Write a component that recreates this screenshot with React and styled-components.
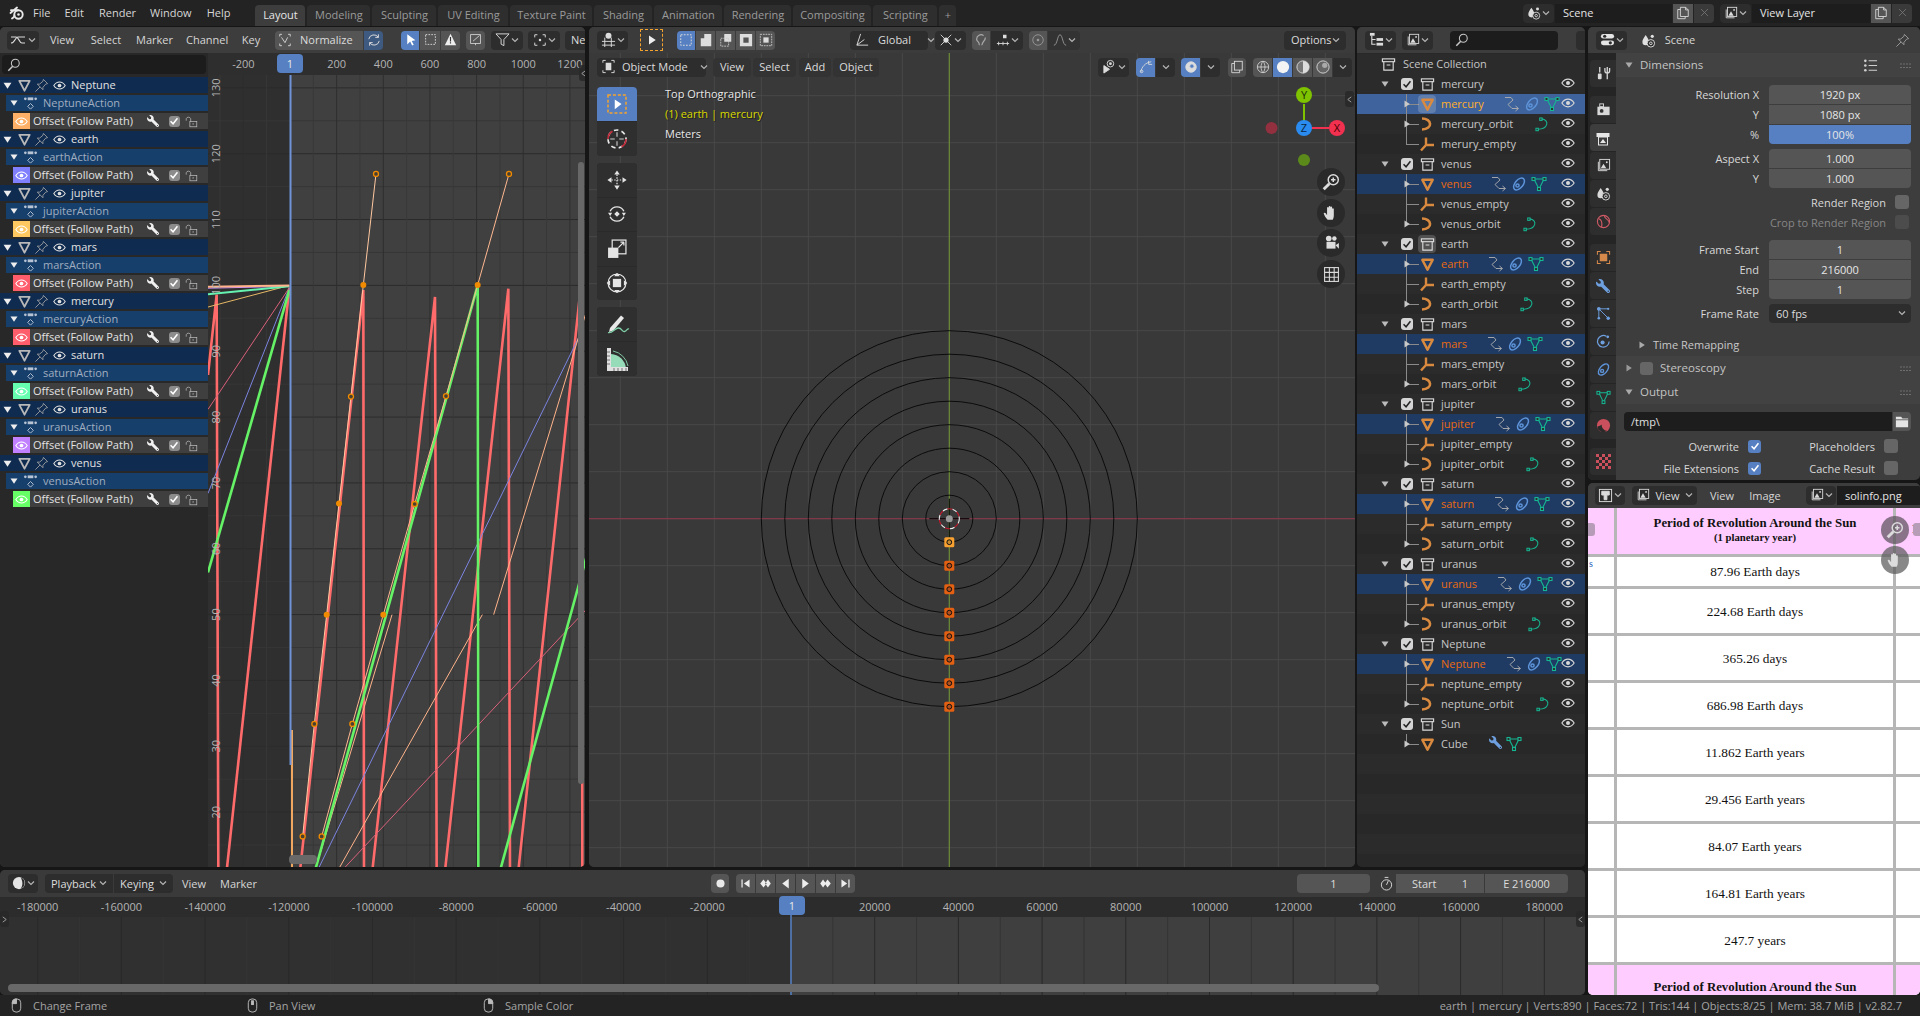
import React from "react";
import styled, { createGlobalStyle } from "styled-components";
import { FaWrench } from "react-icons/fa";

const GlobalStyle = createGlobalStyle`
	html, body { margin: 0; padding: 0; background: #161616; }
	body { font-family: "Open Sans", "DejaVu Sans", sans-serif; font-size: 11px; color: #d6d6d6; white-space: nowrap; }
	svg text { font-family: "Open Sans", "DejaVu Sans", sans-serif; }
`;

const BLUE = "#5680c2";

// layout
const Shell = styled.div`
	width: 1920px;
	height: 1016px;
	overflow: hidden;
	display: grid;
	grid-template-rows: 26px 969px 21px;
	background: #161616;
`;
const TopBar = styled.div`
	display: flex;
	align-items: center;
	background: #232323;
`;
const Workspace = styled.div`
	display: flex;
	gap: 3px;
	padding-top: 1px;
`;
const LeftCol = styled.div`
	width: 1585px;
	display: flex;
	flex-direction: column;
	gap: 3px;
`;
const RightCol = styled.div`
	width: 332px;
	display: flex;
	flex-direction: column;
	gap: 3px;
`;
const UpperRow = styled.div`
	height: 840px;
	display: flex;
`;
const Area = styled.div`
	position: relative;
	flex: none;
	width: ${(p) => p.$w}px;
	height: ${(p) => (p.$h ? p.$h + "px" : "100%")};
	margin-left: ${(p) => p.$ml || 0}px;
	background: ${(p) => p.$bg || "#3d3d3d"};
	border-radius: 5px;
	overflow: hidden;
	display: flex;
	flex-direction: column;
`;
const Header = styled.div`
	flex: none;
	height: ${(p) => p.$h || 26}px;
	display: flex;
	align-items: center;
	background: ${(p) => p.$bg || "#3d3d3d"};
`;
const Sp = styled.div`
	flex: none;
	width: ${(p) => p.$w}px;
`;
const Fill = styled.div`
	flex: 1;
`;

// top bar
const MenuItem = styled.span`
	flex: none;
	margin-right: ${(p) => p.$mr || 0}px;
	padding-bottom: 2px;
	color: ${(p) => p.$c || "#d6d6d6"};
`;
const Tab = styled.div`
	flex: none;
	width: ${(p) => p.$w}px;
	height: 21px;
	margin: 5px 2px 0 0;
	padding-bottom: 2px;
	box-sizing: border-box;
	display: flex;
	align-items: center;
	justify-content: center;
	border-radius: 4px 4px 0 0;
	background: ${(p) => (p.$on ? "#3d3d3d" : "#2e2e2e")};
	color: ${(p) => (p.$on ? "#e6e6e6" : "#9a9a9a")};
`;
const FieldDark = styled.div`
	flex: none;
	width: ${(p) => p.$w}px;
	height: 19px;
	padding: 0 0 1px 8px;
	box-sizing: border-box;
	display: flex;
	align-items: center;
	background: #1d1d1d;
	color: #e4e4e4;
`;

// header buttons
const Btn = styled.div`
	flex: none;
	width: ${(p) => p.$w}px;
	height: ${(p) => p.$h || 19}px;
	margin-left: ${(p) => p.$ml || 0}px;
	display: flex;
	align-items: center;
	justify-content: ${(p) => p.$j || "center"};
	gap: ${(p) => p.$gap || 0}px;
	box-sizing: border-box;
	padding: 0 ${(p) => p.$pad || 0}px 1px;
	border-radius: ${(p) => (p.$r !== undefined ? p.$r : "4px")};
	background: ${(p) => (p.$on ? BLUE : p.$bg || "#2d2d2d")};
	color: ${(p) => p.$c || "#dcdcdc"};
`;
const DashedBtn = styled(Btn)`
	border: 1px dashed #f3a32e;
`;
const BtnGroup = styled.div`
	flex: none;
	display: flex;
	margin-left: ${(p) => p.$ml || 0}px;
	gap: 1px;
	border-radius: 4px;
	overflow: hidden;
`;
const Word = styled.span`
	flex: none;
	width: ${(p) => p.$w}px;
	text-align: center;
	margin-left: ${(p) => p.$ml || 0}px;
	padding-bottom: 1px;
	color: #d6d6d6;
`;

// graph editor
const GraphBody = styled.div`
	flex: 1;
	display: flex;
	min-height: 0;
`;
const ChannelList = styled.div`
	flex: none;
	width: 208px;
	background: #282828;
`;
const Search = styled.div`
	width: ${(p) => p.$w}px;
	height: 19px;
	margin: ${(p) => p.$m || "2px 0 0 2px"};
	padding-left: 5px;
	box-sizing: border-box;
	display: flex;
	align-items: center;
	background: #1c1c1c;
	border-radius: 4px;
	color: #c8c8c8;
`;
const Channels = styled.div`
	margin-top: 3px;
	display: flex;
	flex-direction: column;
	gap: 2px;
`;
const Channel = styled.div`
	height: 16px;
	margin-left: ${(p) => p.$ml || 0}px;
	display: flex;
	align-items: center;
	gap: ${(p) => p.$gap || 0}px;
	background: ${(p) => p.$bg};
	color: ${(p) => p.$c || "#e2e2e2"};

	& > span {
		position: relative;
		top: -1px;
	}
`;
const Swatch = styled.div`
	flex: none;
	width: 17px;
	height: 16px;
	margin-right: 3px;
	display: flex;
	align-items: center;
	justify-content: center;
	background: ${(p) => p.$c};
	color: #fff;
`;
const Tick = styled.div`
	flex: none;
	width: ${(p) => p.$s || 12}px;
	height: ${(p) => p.$s || 12}px;
	margin-left: ${(p) => p.$ml || 0}px;
	border-radius: 3px;
	display: flex;
	align-items: center;
	justify-content: center;
	background: ${(p) => p.$bg};
	color: ${(p) => p.$c || "#fff"};
`;
const Plot = styled.div`
	position: relative;
	flex: 1;
	min-width: 0;
`;
const PlotSvg = styled.svg`
	display: block;
`;
const Thumb = styled.div`
	position: absolute;
	left: ${(p) => p.$x}px;
	top: ${(p) => p.$y}px;
	width: ${(p) => p.$w}px;
	height: ${(p) => p.$h}px;
	background: #686868;
	border-radius: 4px;
`;
const Badge = styled.div`
	position: absolute;
	left: ${(p) => p.$x}px;
	top: ${(p) => p.$y}px;
	width: ${(p) => p.$w}px;
	height: 19px;
	display: flex;
	align-items: center;
	justify-content: center;
	background: ${BLUE};
	border-radius: 4px;
	color: #e8e8e8;
`;
const SideArrow = styled.div`
	position: absolute;
	left: ${(p) => p.$x}px;
	top: ${(p) => p.$y}px;
	width: 9px;
	height: 16px;
	display: flex;
	align-items: center;
	justify-content: center;
	background: rgba(40, 40, 40, 0.85);
	border-radius: 3px;
	color: #a8a8a8;
`;

// viewport
const Canvas = styled.div`
	position: relative;
	flex: 1;
	min-height: 0;
`;
const CanvasSvg = styled.svg`
	position: absolute;
	left: 0;
	top: 0;
`;
const CanvasLayer = styled.div`
	position: relative;
`;
const OverlayRow = styled.div`
	height: 24px;
	display: flex;
	align-items: center;
	padding-top: 2px;
`;
const ToolRow = styled.div`
	display: flex;
	margin-top: 8px;
	padding-left: 8px;
	gap: 28px;
`;
const Tools = styled.div`
	flex: none;
	width: 40px;
	display: flex;
	flex-direction: column;
`;
const ToolGroup = styled.div`
	margin-bottom: 7px;
	border-radius: 4px;
	overflow: hidden;
	display: flex;
	flex-direction: column;
	gap: 1px;
	background: #2a2a2a;
`;
const Tool = styled.div`
	height: ${(p) => p.$h || 34}px;
	display: flex;
	align-items: center;
	justify-content: center;
	background: ${(p) => (p.$on ? BLUE : "#2f2f2f")};
	color: #e4e4e4;
`;
const InfoBlock = styled.div`
	margin-top: -3px;
`;
const Info = styled.div`
	line-height: 20px;
	color: ${(p) => p.$c || "#e8e8e8"};
	text-shadow: 1px 1px 0 #222;
`;
const Gizmo = styled.svg`
	position: absolute;
	left: 674px;
	top: 29px;
`;
const NavBtn = styled.div`
	position: absolute;
	left: ${(p) => p.$x}px;
	top: ${(p) => p.$y}px;
	width: 28px;
	height: 28px;
	border-radius: 50%;
	display: flex;
	align-items: center;
	justify-content: center;
	background: ${(p) => p.$bg || "#2a2a2a"};
	color: #dcdcdc;
`;

// outliner
const OutRows = styled.div`
	margin-top: 1px;
	display: flex;
	flex-direction: column;
`;
const OutRow = styled.div`
	position: relative;
	flex: none;
	height: 20px;
	display: flex;
	align-items: center;
	padding-left: ${(p) => p.$pl || 0}px;
	background: ${(p) => (p.$sel === 2 ? "#3f639c" : p.$sel === 1 ? "#1f3a63" : p.$odd ? "#2b2b2b" : "#282828")};
	color: ${(p) => p.$c || "#c6c6c6"};

	& > span {
		position: relative;
		top: -1px;
	}

	${(p) =>
		p.$tree &&
		`&::before {
			content: "";
			position: absolute;
			left: 49px;
			top: 0;
			width: 1px;
			height: ${p.$last ? "50%" : "100%"};
			background: #8a8a8a;
		}
		&::after {
			content: "";
			position: absolute;
			left: 49px;
			top: 50%;
			width: 13px;
			height: 1px;
			background: #8a8a8a;
		}`}
`;
const OutIcon = styled.div`
	position: relative;
	z-index: 1;
	flex: none;
	width: 18px;
	height: 18px;
	margin-left: ${(p) => p.$ml || 0}px;
	margin-right: ${(p) => p.$mr || 6}px;
	display: flex;
	align-items: center;
	justify-content: center;
	border-radius: 4px;
	background: ${(p) => (p.$hi ? "rgba(255,255,255,0.18)" : "transparent")};
	color: ${(p) => p.$c || "#d0d0d0"};
`;
const RowEye = styled.div`
	position: absolute;
	right: 10px;
	top: 2px;
	color: #d8d8d8;
`;
const Mark = styled.div`
	position: absolute;
	z-index: 1;
	left: ${(p) => p.$x}px;
	top: ${(p) => p.$y || 6}px;
	color: #d0d0d0;
`;
const Extras = styled.div`
	flex: none;
	display: flex;
	gap: 4px;
	margin-left: ${(p) => p.$ml}px;
`;

// properties
const PropsBody = styled.div`
	flex: 1;
	display: flex;
	min-height: 0;
`;
const TabCol = styled.div`
	flex: none;
	width: 28px;
	padding-top: 7px;
	background: #252525;
	display: flex;
	flex-direction: column;
	align-items: flex-end;
`;
const TabGroup = styled.div`
	margin-bottom: 9px;
	display: flex;
	flex-direction: column;
	gap: 1px;
`;
const PropTab = styled.div`
	width: 26px;
	height: 27px;
	display: flex;
	align-items: center;
	justify-content: center;
	border-radius: 4px 0 0 4px;
	background: ${(p) => (p.$on ? "#3d3d3d" : "#2e2e2e")};
`;
const Panel = styled.div`
	flex: 1;
	min-width: 0;
`;
const PanelHead = styled.div`
	height: 24px;
	display: flex;
	align-items: center;
	padding: 0 9px 0 9px;
	gap: 7px;
	background: ${(p) => p.$bg || "#424242"};
	color: #c4c4c4;
	font-size: 11.5px;

	& > span {
		position: relative;
		top: -1px;
	}
`;
const Fields = styled.div`
	margin-top: ${(p) => p.$mt}px;
	display: flex;
	flex-direction: column;
	gap: 1px;
`;
const PropRow = styled.div`
	height: 19px;
	display: grid;
	grid-template-columns: 143px 142px;
	column-gap: 10px;
	align-items: center;
`;
const PropLabel = styled.div`
	padding-bottom: 1px;
	text-align: right;
	color: #d8d8d8;
`;
const NumField = styled.div`
	height: 19px;
	padding-bottom: 1px;
	box-sizing: border-box;
	display: flex;
	align-items: center;
	justify-content: center;
	background: ${(p) => (p.$on ? BLUE : p.$bg || "#555")};
	border-radius: ${(p) => p.$r || 0};
	color: #e6e6e6;
`;
const DropField = styled.div`
	height: 19px;
	padding: 0 5px 1px 7px;
	box-sizing: border-box;
	display: flex;
	align-items: center;
	justify-content: space-between;
	background: #2d2d2d;
	border-radius: 4px;
	color: #dcdcdc;
`;
const CheckRow = styled.div`
	height: 20px;
	margin-top: ${(p) => p.$mt || 0}px;
	display: flex;
	align-items: center;
	justify-content: flex-end;
	gap: 9px;
	padding-right: ${(p) => p.$pr ?? 11}px;
	color: ${(p) => p.$c || "#d8d8d8"};
`;
const TwoCols = styled.div`
	display: grid;
	grid-template-columns: 145px 148px;
	margin-top: ${(p) => p.$mt || 0}px;
`;
const SubHead = styled.div`
	height: 23px;
	margin-top: 10px;
	padding-left: 22px;
	display: flex;
	align-items: center;
	gap: 7px;
	color: #c8c8c8;
	font-size: 11px;
`;
const PathField = styled.div`
	margin: 8px 9px 0 8px;
	height: 19px;
	display: flex;
	gap: 1px;
	border-radius: 4px;
	overflow: hidden;
`;
const PathText = styled.div`
	flex: 1;
	padding-left: 7px;
	display: flex;
	align-items: center;
	background: #1d1d1d;
	color: #e0e0e0;
`;
const PathBtn = styled.div`
	flex: none;
	width: 18px;
	display: flex;
	align-items: center;
	justify-content: center;
	background: #555;
	color: #e4e4e4;
`;

// image editor
const ImageView = styled.div`
	position: relative;
	flex: 1;
	min-height: 0;
	overflow: hidden;
	display: grid;
	grid-template-columns: 29px 279px 24px;
	grid-template-rows: 49px 32px repeat(8, 47px) 60px;
	font-family: "Liberation Serif", serif;
	color: #111;
	background: #fff;
`;
const Cell = styled.div`
	box-sizing: border-box;
	padding-top: ${(p) => (p.$pink ? 0 : 1)}px;
	padding-bottom: ${(p) => (p.$pink ? 3 : 0)}px;
	display: flex;
	flex-direction: column;
	align-items: ${(p) => p.$a || "center"};
	justify-content: ${(p) => p.$j || "center"};
	text-align: center;
	overflow: hidden;
	border-bottom: 3px solid #b6b6b6;
	border-right: ${(p) => (p.$end ? "0" : "3px solid #b6b6b6")};
	background: ${(p) => (p.$pink ? "#ffccff" : "#fff")};
	font-size: ${(p) => (p.$pink ? 12.8 : 13.3)}px;
	font-weight: ${(p) => (p.$pink ? 700 : 400)};
`;
const CellSub = styled.div`
	font-size: 10.7px;
	line-height: 13px;
`;
const TitleLine = styled.div`
	line-height: 15px;
	margin-top: ${(p) => p.$mt || 0}px;
`;
const Stray = styled.span`
	font-size: 10px;
	padding-left: 1px;
	color: ${(p) => p.$c};
`;
const Pill = styled.div`
	position: absolute;
	left: ${(p) => p.$x}px;
	top: 15px;
	width: 7px;
	height: 13px;
	background: #b79cb7;
	border-radius: ${(p) => p.$r};
`;

// timeline
const TimeCanvas = styled.div`
	position: relative;
	flex: 1;
	min-height: 0;
`;

// status bar
const StatusBar = styled.div`
	display: flex;
	align-items: center;
	background: #232323;
	color: #a4a4a4;
	padding-bottom: 1px;
`;
const Hint = styled.span`
	width: ${(p) => p.$w}px;
`;

// icons
const SvgBox = styled.svg`
	flex: none;
	display: block;
	width: ${(p) => p.$s}px;
	height: ${(p) => p.$s}px;
`;
const Ico = ({ s = 16, w = 1.2, children, ...rest }) => (
	<SvgBox $s={s} viewBox="0 0 16 16" fill="none" stroke="currentColor" strokeWidth={w} {...rest}>
		{children}
	</SvgBox>
);
const Chevron = ({ s = 8 }) => (
	<SvgBox $s={s} viewBox="0 0 8 8" fill="none" stroke="#b4b4b4" strokeWidth="1.2">
		<path d="M1 2.5 4 5.5 7 2.5" />
	</SvgBox>
);
const Eye = ({ s = 14 }) => (
	<Ico s={s} w={1.3}>
		<path d="M1 8C3 4.8 5.4 3.6 8 3.6S13 4.8 15 8C13 11.2 10.6 12.4 8 12.4S3 11.2 1 8Z" />
		<circle cx="8" cy="8" r="2.3" fill="currentColor" stroke="none" />
	</Ico>
);
const Tri = ({ s = 16, w = 2.4, c }) => (
	<Ico s={s} w={w} style={c ? { color: c } : undefined}>
		<path d="M2.5 3H13.5L8 13.5Z" strokeLinejoin="round" />
	</Ico>
);
const Pin = () => (
	<Ico s={15} w={0.9} style={{ color: "#a6a6a6" }}>
		<path d="M10 1.5 14.5 6 12.5 6.5 9.5 10 9.5 12.5 3.5 6.5 6 6.5 9.5 3.5Z M6.5 9.5 1.5 14.5" />
	</Ico>
);
const ActionIcon = () => (
	<Ico s={15} w={1} style={{ color: "#b8c4d4" }}>
		<rect x="5" y="1.5" width="6" height="3" fill="currentColor" stroke="none" />
		<circle cx="2.5" cy="3" r="1.4" fill="currentColor" stroke="none" />
		<circle cx="13.5" cy="3" r="1.4" fill="currentColor" stroke="none" />
		<path d="M8 8 11 11 8 14 5 11Z" />
	</Ico>
);
const Unlock = () => (
	<Ico s={13} w={0.9} style={{ color: "#bdbdbd" }}>
		<rect x="6" y="8" width="8.5" height="6.5" />
		<path d="M7 8V4.5A3 3 0 0 0 1.5 4.5V7" />
		<circle cx="10" cy="11" r="0.8" fill="currentColor" stroke="none" />
	</Ico>
);
const Lens = () => (
	<Ico s={14} w={1.2}>
		<circle cx="9.5" cy="6" r="4.5" />
		<path d="M6.5 9.5 1.5 14.5" strokeWidth="1.8" />
	</Ico>
);
const Check = ({ s = 10 }) => (
	<Ico s={s} w={2.4}>
		<path d="M2.5 8.5 6.5 12.5 13.5 3.5" />
	</Ico>
);
const Collection = () => (
	<Ico s={15} w={1.2}>
		<rect x="1.5" y="2" width="13" height="3" />
		<path d="M3 5V14H13V5M6 8.5H10" />
	</Ico>
);
const CurveObj = () => (
	<Ico s={16} w={2.6}>
		<path d="M3 2.5C13 2.5 14.5 13 3 13.5" />
	</Ico>
);
const EmptyObj = () => (
	<Ico s={16} w={2.4}>
		<path d="M7 1.5V9M7 9H15M7 9 2 14.5" />
	</Ico>
);
const AnimData = () => (
	<Ico s={16} w={0.9} style={{ color: "#b0b0b0" }}>
		<path d="M1 1.5H7L9 4 4 8.5 8 12.5H14M11.5 10 14.5 12.5 11.5 15" />
	</Ico>
);
const LinkData = ({ c = "#5d93d8", s = 16 }) => (
	<Ico s={s} w={1.5} style={{ color: c }}>
		<ellipse cx="8" cy="8" rx="4" ry="7" transform="rotate(40 8 8)" />
		<circle cx="6.5" cy="9.5" r="1.6" />
	</Ico>
);
const MeshData = ({ c = "#16b592", s = 16 }) => (
	<Ico s={s} w={1.1} style={{ color: c }}>
		<path d="M3 3H13L8 13Z" />
		<rect x="1" y="1.5" width="3" height="3" fill="#2a2a2a" />
		<rect x="12" y="1.5" width="3" height="3" fill="#2a2a2a" />
		<rect x="6.5" y="11.5" width="3" height="3" fill="#2a2a2a" />
	</Ico>
);
const CurveData = () => (
	<Ico s={15} w={1.1} style={{ color: "#16b592" }}>
		<path d="M7 2C16 3 14 13 3 13" />
		<rect x="5" y="1" width="2.6" height="2.6" />
		<rect x="1" y="12" width="2.6" height="2.6" />
	</Ico>
);
const PictureIcon = ({ s = 15, c = "#dcdcdc" }) => (
	<Ico s={s} w={1} style={{ color: c }}>
		<rect x="4" y="1.5" width="10.5" height="10.5" />
		<path d="M2.5 4V13.5H12" />
		<path d="M5 11 8 6 11 11Z" fill="currentColor" stroke="none" />
		<circle cx="11.5" cy="4.5" r="1" fill="currentColor" stroke="none" />
	</Ico>
);
const SceneIcon = ({ s = 15, c = "#dcdcdc" }) => (
	<Ico s={s} w={1} style={{ color: c }}>
		<path d="M5 2C7 5 8.5 7 8.5 9.5A3.5 3.5 0 0 1 1.5 9.5C1.5 7 3 5 5 2Z" fill="currentColor" stroke="none" />
		<circle cx="12" cy="3.5" r="1.7" fill="currentColor" stroke="none" />
		<circle cx="10.5" cy="11" r="4" fill="#2d2d2d" />
		<circle cx="10.5" cy="11" r="1.4" />
	</Ico>
);
const CopyIcon = () => (
	<Ico s={14} w={1}>
		<path d="M5 1.5H11L14 4.5V12H5ZM5 4H2V14.5H10.5V12M11 1.5V4.5H14" />
	</Ico>
);
const CrossIcon = () => (
	<Ico s={11} w={1.2}>
		<path d="M3 3 13 13M13 3 3 13" />
	</Ico>
);
const Arrow = ({ s = 14, c = "#fff" }) => (
	<SvgBox $s={s} viewBox="0 0 16 16" fill={c}>
		<path d="M4 1.5 14 9 9.5 9.8 12 14.5 10 15.5 7.6 10.6 4 14Z" />
	</SvgBox>
);
const DashBox = ({ s = 14, c = "currentColor" }) => (
	<Ico s={s} w={1.1} style={{ color: c }}>
		<rect x="2" y="2" width="12" height="12" strokeDasharray="2 1.5" />
	</Ico>
);
const Caret = ({ open, c = "#e6e6e6", s = 9 }) => (
	<SvgBox $s={s} viewBox="0 0 8 8" fill={c}>
		<path d={open ? "M0.5 1.5H7.5L4 6.8Z" : "M1.5 0.5 6.8 4 1.5 7.5Z"} />
	</SvgBox>
);
const Grip = () => (
	<SvgBox $s={11} viewBox="0 0 11 11" fill="#9a9a9a">
		{[1, 4, 7, 10].map((x) => [3.5, 7].map((y) => <rect key={x + "-" + y} x={x - 0.5} y={y} width="1" height="1" />))}
	</SvgBox>
);
const PresetList = () => (
	<Ico s={15} w={1.1} style={{ color: "#cfcfcf" }}>
		<path d="M6 3H15M6 8H15M6 13H15" />
		<circle cx="2.5" cy="3" r="1.4" fill="currentColor" stroke="none" />
		<circle cx="2.5" cy="8" r="1.4" fill="currentColor" stroke="none" />
		<circle cx="2.5" cy="13" r="1.4" fill="currentColor" stroke="none" />
	</Ico>
);
const Mouse = ({ fill }) => (
	<Ico s={15} w={1} style={{ color: "#bcbcbc" }}>
		<rect x="3.5" y="1" width="9" height="14" rx="4" />
		{fill === "l" && <path d="M3.5 6V5A4 4 0 0 1 8 1V6Z" fill="currentColor" />}
		{fill === "m" && <rect x="7" y="3" width="2" height="4" fill="currentColor" />}
		{fill === "r" && <path d="M8 1A4 4 0 0 1 12.5 5V6H8Z" fill="currentColor" />}
	</Ico>
);
const Logo = () => (
	<SvgBox $s={16} viewBox="0 0 16 16" fill="none" stroke="#e8e8e8" strokeWidth="1.9">
		<circle cx="9.5" cy="9.5" r="4.2" />
		<path d="M9 5.2H2M8 2.5 1.5 8M5.3 10.5C5.5 11 4.5 12.5 3 13.5" strokeLinecap="round" />
		<circle cx="9.5" cy="9.5" r="1.3" fill="#e8e8e8" stroke="none" />
	</SvgBox>
);

// small drawings for the toolbar and property tabs
const MoveIcon = () => (
	<Ico s={22} w={0.9}>
		<path d="M8 4V12M4 8H12" strokeDasharray="1 1" />
		<path d="M8 1 10 4H6ZM8 15 6 12H10ZM1 8 4 6V10ZM15 8 12 10V6Z" fill="currentColor" stroke="none" />
	</Ico>
);
const RotateIcon = () => (
	<Ico s={22} w={1}>
		<path d="M3 6A5.5 5.5 0 0 1 13 6M3 10A5.5 5.5 0 0 0 13 10" />
		<path d="M8 6 10 8 8 10 6 8ZM1.5 7H4.5L3 9.5ZM11.5 7H14.5L13 9.5Z" fill="currentColor" stroke="none" />
	</Ico>
);
const ScaleIcon = () => (
	<Ico s={22} w={0.9}>
		<rect x="4.5" y="1.5" width="10" height="10" />
		<rect x="1.5" y="7" width="7.5" height="7.5" fill="currentColor" stroke="none" />
		<path d="M9 7 13 3M13 3H10.5M13 3V5.5" />
	</Ico>
);
const TransformIcon = () => (
	<Ico s={22} w={0.9}>
		<circle cx="8" cy="8" r="6.5" />
		<rect x="5" y="5" width="6" height="6" fill="currentColor" stroke="none" />
		<path d="M8 .5 10 3H6ZM8 15.5 6 13H10ZM.5 8 3 6V10ZM15.5 8 13 10V6Z" fill="currentColor" stroke="none" />
	</Ico>
);
const AnnotateIcon = () => (
	<SvgBox $s={26} viewBox="0 0 26 26" fill="none">
		<path d="M6 17 17 4.5 20 7 9.5 19.5 5 21Z" fill="#e8e8e8" />
		<path d="M4 21.5C8 23 11 17 14.5 17S18 21 20.5 20.5 23 17 25 18" stroke="#7fd0a8" strokeWidth="1.3" />
	</SvgBox>
);
const MeasureIcon = () => (
	<SvgBox $s={26} viewBox="0 0 26 26" fill="none">
		<path d="M7 8A16 16 0 0 1 22 22H7Z" fill="#97dcb8" />
		<path d="M9 5A19 19 0 0 1 24 20" stroke="#7fc4a0" strokeWidth="1" />
		<path d="M3 2H7V21H24V25H3Z" fill="#e0e0e0" />
		<path d="M3 6H6M3 10H6M3 14H6M3 18H6M10 22V25M14 22V25M18 22V25M22 22V25" stroke="#555" strokeWidth="0.8" />
	</SvgBox>
);
const CursorIcon = () => (
	<Ico s={24} w={1.1}>
		<circle cx="8" cy="8" r="6" stroke="#e8e8e8" strokeDasharray="3 2.2" />
		<path d="M2 8A6 6 0 0 1 5 2.8M14 8A6 6 0 0 1 11 13.2" stroke="#c22b3a" />
		<path d="M8 3.5V6.5M8 9.5V12.5M3.5 8H6.5M9.5 8H12.5" stroke="#999" />
	</Ico>
);
const SelectTool = () => (
	<Ico s={24} w={1} style={{ color: "#f3a32e" }}>
		<rect x="2" y="2" width="12" height="12" strokeDasharray="2 1.3" />
		<path d="M6.5 5V11.5L11 8Z" fill="#fff" stroke="none" />
	</Ico>
);
const ToolsTab = () => (
	<Ico s={15} w={1.4} style={{ color: "#d8d8d8" }}>
		<path d="M4 1V7M12 1V14M9.5 2V5A2.5 2.5 0 0 0 14.5 5V2" />
		<rect x="2" y="8" width="4" height="6" rx="1" fill="currentColor" stroke="none" />
	</Ico>
);
const RenderTab = () => (
	<Ico s={15} w={1} style={{ color: "#d8d8d8" }}>
		<rect x="1.5" y="5" width="13" height="9" fill="currentColor" stroke="none" />
		<rect x="4" y="2" width="4" height="3" />
		<circle cx="6" cy="9.5" r="2" fill="#333" stroke="none" />
	</Ico>
);
const OutputTab = () => (
	<Ico s={16} w={1} style={{ color: "#e6e6e6" }}>
		<rect x="1.5" y="3" width="13" height="4" fill="currentColor" stroke="none" />
		<rect x="3.5" y="7" width="9" height="8" />
		<path d="M5 13 8 9 11 13Z" fill="currentColor" stroke="none" />
	</Ico>
);
const WorldTab = () => (
	<Ico s={15} w={1.2} style={{ color: "#cf5a66" }}>
		<circle cx="8" cy="8" r="6.5" />
		<path d="M3 5C6 6 7 8 6 14M9 2C9 5 14 6 14 9" />
	</Ico>
);
const ObjectTab = () => (
	<Ico s={15} w={1.1} style={{ color: "#d58a4b" }}>
		<rect x="4" y="4" width="8" height="8" fill="currentColor" stroke="none" />
		<path d="M1.5 5V1.5H5M11 1.5H14.5V5M14.5 11V14.5H11M5 14.5H1.5V11" />
	</Ico>
);
const ParticleTab = () => (
	<Ico s={15} w={1} style={{ color: "#6ea0e0" }}>
		<path d="M3 3H13M3 3V13M3 3 13 13" />
		<circle cx="3" cy="3" r="2" fill="currentColor" stroke="none" />
		<circle cx="13" cy="3" r="1.2" fill="currentColor" stroke="none" />
		<circle cx="3" cy="13" r="1.4" fill="currentColor" stroke="none" />
		<circle cx="13" cy="13" r="1.8" fill="currentColor" stroke="none" />
	</Ico>
);
const PhysicsTab = () => (
	<Ico s={15} w={1.3} style={{ color: "#6ea0e0" }}>
		<path d="M11 2.5A6.2 6.2 0 1 0 14 8" />
		<circle cx="7" cy="9" r="2.2" fill="currentColor" stroke="none" />
		<circle cx="12.5" cy="3" r="1.5" fill="currentColor" stroke="none" />
	</Ico>
);
const MaterialTab = () => (
	<SvgBox $s={15} viewBox="0 0 16 16">
		<circle cx="8" cy="8" r="7" fill="#c9505c" />
		<path d="M1.5 9C3 9 5 8 6 7 6 11 9 14 12 13.5 10 15 7 15.5 4.5 14 2.5 13 1.5 11 1.5 9Z" fill="#2a2a2a" />
	</SvgBox>
);
const TextureTab = () => (
	<SvgBox $s={15} viewBox="0 0 15 15">
		<rect width="15" height="15" fill="#2a2a2a" />
		{[0, 3, 6, 9, 12].map((x, i) =>
			[0, 3, 6, 9, 12].map((y, j) => (i + j) % 2 === 0 && <rect key={x + "-" + y} x={x} y={y} width="3" height="3" fill="#c9505c" />)
		)}
	</SvgBox>
);

// graph editor plot. points were read off the screenshot crop at x 200, y 150
const gx = (x) => 200 + x / 3;
const gy = (y) => 150 + y / 2.178;
const pts = (list) => list.map(([x, y]) => `${gx(x)},${gy(y)}`).join(" ");

const plotY0 = 285.4;
const plotYStep = 65.84;
const plotXStep = 46.65;
const yLabels = [130, 120, 110, 100, 90, 80, 70, 60, 50, 40, 30, 20];
const xLabels = [-200, 200, 400, 600, 800, 1000, 1200];

const redLines = [
	[[24, 490], [50, 315], [55, 1570]],
	[[80, 1570], [268, 300]],
	[[300, 1570], [490, 305], [492, 1570]],
	[[517, 1570], [705, 320], [710, 1570]],
	[[735, 1570], [925, 302], [930, 1570]],
	[[955, 1570], [1145, 280], [1147, 1570]],
];
const thinLines = [
	{ c: "#7b84e0", p: [[24, 748], [268, 300]] },
	{ c: "#7b84e0", p: [[352, 1570], [1145, 395]] },
	{ c: "#d9607a", p: [[24, 565], [268, 300]] },
	{ c: "#d9607a", p: [[425, 1570], [1160, 1000]] },
	{ c: "#ffb38a", p: [[576, 1012], [345, 1570]] },
	{ c: "#ffb38a", p: [[847, 1012], [413, 1570]] },
	{ c: "#ffb38a", p: [[881, 1012], [1160, 350]] },
	{ c: "#e6b866", p: [[24, 342], [268, 295]] },
	{ c: "#c98cff", p: [[24, 301], [268, 297]] },
];
const handleA = [[528, 52, 0], [490, 294, 1], [453, 537, 0], [417, 770, 1], [380, 1012, 1], [343, 1250, 0], [308, 1495, 0]];
const handleB = [[927, 52, 0], [833, 294, 1], [738, 536, 0], [644, 771, 0], [550, 1012, 1], [457, 1250, 0], [365, 1495, 0]];

const GraphPlot = () => {
	const hs = [];
	for (let k = -4; k <= 18; k++) hs.push(k);
	const vs = [];
	for (let k = -4; k <= 12; k++) vs.push(k);
	return (
		<PlotSvg width="377" height="814" viewBox="208 53 377 814">
			<rect x="208" y="75" width="82" height="792" fill="#2f2f2f" />
			<rect x="290" y="75" width="295" height="792" fill="#404040" />
			{hs.map((k) => (
				<line key={"h" + k} x1="208" x2="585" y1={plotY0 + plotYStep * k} y2={plotY0 + plotYStep * k} stroke="#2b2b2b" />
			))}
			{hs.map((k) => (
				<line key={"hm" + k} x1="208" x2="585" y1={plotY0 + plotYStep * (k + 0.5)} y2={plotY0 + plotYStep * (k + 0.5)} stroke="#363636" />
			))}
			{vs.map((k) => (
				<line key={"v" + k} y1="75" y2="867" x1={290 + plotXStep * k} x2={290 + plotXStep * k} stroke="#2e2e2e" />
			))}
			{vs.map((k) => (
				<line key={"vm" + k} y1="75" y2="867" x1={290 + plotXStep * (k + 0.5)} x2={290 + plotXStep * (k + 0.5)} stroke="#383838" />
			))}
			<rect x="208" y="53" width="377" height="22" fill="#2e2e2e" />
			{xLabels.map((v) => (
				<text key={v} x={290 + (v / 200) * plotXStep} y="68" fontSize="11" fill="#b4b4b4" textAnchor="middle">
					{v}
				</text>
			))}
			{redLines.map((p, i) => (
				<polyline key={i} points={pts(p)} fill="none" stroke="#ff6b6b" strokeWidth="2.6" />
			))}
			{thinLines.map((l, i) => (
				<polyline key={i} points={pts(l.p)} fill="none" stroke={l.c} strokeWidth="1" />
			))}
			<polyline points={pts([[24, 920], [268, 305]])} fill="none" stroke="#66f266" strokeWidth="2.6" />
			<polyline points={pts([[345, 1570], [833, 295], [835, 1570]])} fill="none" stroke="#66f266" strokeWidth="2.6" />
			<polyline points={pts([[900, 1570], [1160, 885]])} fill="none" stroke="#66f266" strokeWidth="2.6" />
			<polyline points={pts([[24, 314], [268, 297]])} fill="none" stroke="#66f2b0" strokeWidth="2" />
			<polyline points={pts([[24, 298], [268, 295]])} fill="none" stroke="#ffb38a" strokeWidth="2" />
			<polyline points={pts(handleA.map((h) => [h[0], h[1]]))} fill="none" stroke="#ffc8a0" strokeWidth="1" />
			<polyline points={pts(handleB.map((h) => [h[0], h[1]]))} fill="none" stroke="#ffb890" strokeWidth="1" />
			<line x1="292" x2="292" y1="730" y2="867" stroke="#f0a860" strokeWidth="2" />
			<line x1="290.5" x2="290.5" y1="75" y2="765" stroke="#6f93d6" strokeWidth="2" />
			{[...handleA, ...handleB].map(([x, y, solid], i) =>
				solid ? (
					<circle key={i} cx={gx(x)} cy={gy(y)} r="3" fill="#f08a00" />
				) : (
					<circle key={i} cx={gx(x)} cy={gy(y)} r="2.5" fill="#4a4030" stroke="#f08a00" strokeWidth="1.3" />
				)
			)}
			{yLabels.map((v) => {
				const y = plotY0 + ((100 - v) / 10) * plotYStep;
				return (
					<text key={v} x="220" y={y} fontSize="11" fill="#b4b4b4" textAnchor="middle" transform={`rotate(-90 220 ${y})`}>
						{v}
					</text>
				);
			})}
		</PlotSvg>
	);
};

const vpCx = 949.3;
const vpCy = 518.7;
const ringStep = 23.5;
const rings = [1, 2, 3, 4, 5, 6, 7, 8];

const Scene3D = () => {
	const xs = [];
	for (let k = -8; k <= 8; k++) xs.push(vpCx + 47 * k);
	const ys = [];
	for (let k = -10; k <= 8; k++) ys.push(vpCy + 47 * k);
	return (
		<CanvasSvg width="766" height="814" viewBox="589 53 766 814">
			<rect x="589" y="53" width="766" height="814" fill="#393939" />
			{xs.map((x) => (
				<line key={x} x1={x} x2={x} y1="53" y2="867" stroke="#494949" />
			))}
			{ys.map((y) => (
				<line key={y} x1="589" x2="1355" y1={y} y2={y} stroke="#494949" />
			))}
			<line x1="589" x2="1355" y1={vpCy} y2={vpCy} stroke="#81394a" strokeWidth="1.2" />
			<line x1={vpCx} x2={vpCx} y1="53" y2="867" stroke="#6f9235" strokeWidth="1.1" />
			{rings.map((r) => (
				<circle key={r} cx={vpCx} cy={vpCy} r={ringStep * r} fill="none" stroke="#0b0b0b" strokeWidth="1" />
			))}
			<path d={`M${vpCx - 20} ${vpCy}H${vpCx + 20}M${vpCx} ${vpCy - 20}V${vpCy + 20}`} stroke="#000" strokeWidth="1" />
			<circle cx={vpCx} cy={vpCy} r="10" fill="none" stroke="#eee" strokeWidth="1.1" strokeDasharray="5 5" />
			<circle cx={vpCx} cy={vpCy} r="10" fill="none" stroke="#c4182c" strokeWidth="1.1" strokeDasharray="5 5" strokeDashoffset="5" />
			<circle cx={vpCx} cy={vpCy} r="3.5" fill="#9a9a9a" />
			{rings.map((r) => (
				<g key={r}>
					<rect x={vpCx - 5} y={vpCy + ringStep * r - 5} width="10" height="10" rx="1.5" fill={r === 1 ? "#f8a130" : "#e35f12"} />
					<circle cx={vpCx} cy={vpCy + ringStep * r} r="2.4" fill={r === 1 ? "#c88a30" : "#b05020"} stroke="#101010" />
				</g>
			))}
		</CanvasSvg>
	);
};

const AxisGizmo = () => (
	<Gizmo width="90" height="90" viewBox="0 0 90 90">
		<line x1="41" y1="46" x2="41" y2="22" stroke="#7fc200" strokeWidth="2" />
		<line x1="41" y1="46" x2="66" y2="46" stroke="#f2304f" strokeWidth="2" />
		<circle cx="8.5" cy="46" r="6" fill="#93303f" />
		<circle cx="41" cy="78" r="6" fill="#5c8a1a" />
		<circle cx="41" cy="13" r="8" fill="#7fc200" />
		<text x="41" y="17" fontSize="11" fill="#17300a" textAnchor="middle">Y</text>
		<circle cx="74" cy="46" r="8" fill="#f2304f" />
		<text x="74" y="50" fontSize="11" fill="#400" textAnchor="middle">X</text>
		<circle cx="41" cy="46" r="8" fill="#2a8cf0" />
		<text x="41" y="50" fontSize="11" fill="#0a2440" textAnchor="middle">Z</text>
	</Gizmo>
);

const Hand = ({ s = 18 }) => (
	<Ico s={s} w={0}>
		<path d="M5 14C3 12 2 10 1.5 8.5 1.5 7.5 3 7.5 3.5 8.5L4.5 10V3.5C4.5 2.5 6 2.5 6 3.5V7.5V2.5C6 1.5 7.5 1.5 7.5 2.5V7.5V3C7.5 2 9 2 9 3V8V4.5C9 3.5 10.5 3.5 10.5 4.5V10C10.5 12 10 13 9.5 14Z" fill="currentColor" />
	</Ico>
);
const ZoomLens = ({ s = 18 }) => (
	<Ico s={s} w={1.3}>
		<circle cx="10" cy="6" r="4.5" />
		<path d="M8 6H12M10 4V8" />
		<path d="M6.5 9.5 1.5 14.5" strokeWidth="2.6" />
	</Ico>
);

const planetColors = {
	Neptune: "#ffb066",
	earth: "#8080ff",
	jupiter: "#ffc860",
	mars: "#ff5c6c",
	mercury: "#ff5c6c",
	saturn: "#66ffb0",
	uranus: "#c080ff",
	venus: "#66ff66",
};

const ChannelGroup = ({ name }) => (
	<>
		<Channel $bg="#0f2b50">
			<Sp $w={3} />
			<Caret open c="#eee" />
			<Sp $w={5} />
			<Tri s={15} w={2} c="#b8b8b8" />
			<Sp $w={2} />
			<Pin />
			<Sp $w={4} />
			<Eye s={13} />
			<Sp $w={5} />
			<span>{name}</span>
		</Channel>
		<Channel $bg="#173f6b" $ml={6} $c="#a0aec0">
			<Sp $w={4} />
			<Caret open c="#eee" s={8} />
			<Sp $w={5} />
			<ActionIcon />
			<Sp $w={5} />
			<span>{name}Action</span>
		</Channel>
		<Channel $bg="#3f3f3f" $ml={13}>
			<Swatch $c={planetColors[name]}>
				<Eye s={13} />
			</Swatch>
			<span>Offset (Follow Path)</span>
			<Sp $w={14} />
			<FaWrench size={12} color="#f0f0f0" style={{ transform: "scaleX(-1)" }} />
			<Sp $w={10} />
			<Tick $bg="#8c8c8c" $s={11}>
				<Check />
			</Tick>
			<Sp $w={5} />
			<Unlock />
		</Channel>
	</>
);

// outliner rows
const planets = [
	{ name: "mercury", kids: ["mercury", "mercury_orbit", "merury_empty"], active: true },
	{ name: "venus", kids: ["venus", "venus_empty", "venus_orbit"] },
	{ name: "earth", kids: ["earth", "earth_empty", "earth_orbit"], boxed: true },
	{ name: "mars", kids: ["mars", "mars_empty", "mars_orbit"] },
	{ name: "jupiter", kids: ["jupiter", "jupiter_empty", "jupiter_orbit"] },
	{ name: "saturn", kids: ["saturn", "saturn_empty", "saturn_orbit"] },
	{ name: "uranus", kids: ["uranus", "uranus_empty", "uranus_orbit"] },
	{ name: "Neptune", kids: ["Neptune", "neptune_empty", "neptune_orbit"] },
];

const CollectionRow = ({ name, odd, boxed }) => (
	<OutRow $odd={odd} $pl={61}>
		<Mark $x={24}><Caret open c="#bcbcbc" s={8} /></Mark>
		<Mark $x={44} $y={4}><Tick $bg="#d4d4d4" $c="#222"><Check /></Tick></Mark>
		<OutIcon $hi={boxed} $c="#dcdcdc" $mr={5}><Collection /></OutIcon>
		<span>{name}</span>
		<RowEye><Eye /></RowEye>
	</OutRow>
);

const buildRows = () => {
	const rows = [];
	let i = 1;
	planets.forEach((pl) => {
		rows.push(<CollectionRow key={pl.name + "c"} name={pl.name} boxed={pl.boxed} odd={i++ % 2 === 1} />);
		pl.kids.forEach((k, idx) => {
			const isObject = idx === 0;
			const isOrbit = k.endsWith("orbit");
			rows.push(
				<OutRow
					key={k + idx}
					$tree
					$last={idx === 2}
					$pl={61}
					$odd={i++ % 2 === 1}
					$sel={isObject ? (pl.active ? 2 : 1) : 0}
					$c={isObject ? (pl.active ? "#ffb02e" : "#ea6a10") : undefined}
				>
					{(isObject || isOrbit) && <Mark $x={46}><Caret c="#c8c8c8" s={8} /></Mark>}
					<OutIcon $hi={pl.active && isObject} $c="#d98a3f" $mr={5}>
						{isObject ? <Tri s={15} w={2.6} /> : isOrbit ? <CurveObj /> : <EmptyObj />}
					</OutIcon>
					<span>{k}</span>
					{isObject && (
						<Extras $ml={20}>
							<AnimData />
							<LinkData />
							<MeshData />
						</Extras>
					)}
					{isOrbit && (
						<Extras $ml={22}>
							<CurveData />
						</Extras>
					)}
					<RowEye><Eye /></RowEye>
				</OutRow>
			);
		});
	});
	rows.push(<CollectionRow key="sun" name="Sun" odd={i++ % 2 === 1} />);
	rows.push(
		<OutRow key="cube" $tree $last $pl={61} $odd={i++ % 2 === 1}>
			<Mark $x={46}><Caret c="#c8c8c8" s={8} /></Mark>
			<OutIcon $c="#d98a3f" $mr={5}><Tri s={15} w={2.6} /></OutIcon>
			<span>Cube</span>
			<Extras $ml={21}>
				<FaWrench size={13} color="#6ea0e0" style={{ transform: "scaleX(-1)" }} />
				<MeshData />
			</Extras>
		</OutRow>
	);
	for (let n = 0; n < 6; n++) rows.push(<OutRow key={"e" + n} $odd={i++ % 2 === 1} />);
	return rows;
};

// timeline
const TimelineBody = () => {
	const step = 41.85;
	const ticks = [];
	for (let k = -19; k <= 19; k++) ticks.push(k);
	const labels = [-180000, -160000, -140000, -120000, -100000, -80000, -60000, -40000, -20000, 20000, 40000, 60000, 80000, 100000, 120000, 140000, 160000, 180000];
	return (
		<PlotSvg width="1585" height="98" viewBox="0 897 1585 98">
			<rect x="0" y="917" width="791" height="78" fill="#303030" />
			<rect x="791" y="917" width="794" height="78" fill="#3f3f3f" />
			{ticks.map((k) => (
				<line key={k} x1={791 + step * k} x2={791 + step * k} y1="917" y2="995" stroke={k % 2 === 0 ? "#292929" : "#343434"} />
			))}
			<rect x="0" y="897" width="1585" height="20" fill="#2c2c2c" />
			{labels.map((v) => (
				<text key={v} x={791 + (v / 20000) * 83.7} y="911" fontSize="11" fill="#b4b4b4" textAnchor="middle">
					{v}
				</text>
			))}
			<line x1="791" x2="791" y1="915" y2="995" stroke={BLUE} strokeWidth="1.6" />
		</PlotSvg>
	);
};

const transport = [
	"M3 3V13H4.5V3ZM13 3 6 8 13 13Z",
	"M5.5 3 9.5 8 5.5 13 1.5 8ZM11 3 7.5 8 11 13 14.5 8Z",
	"M12 2 4 8 12 14Z",
	"M4 2 12 8 4 14Z",
	"M5 3 8.5 8 5 13 1.5 8ZM10.5 3 14.5 8 10.5 13 7 8Z",
	"M13 3V13H11.5V3ZM3 3 10 8 3 13Z",
];

const rows = [
	"87.96 Earth days",
	"224.68 Earth days",
	"365.26 days",
	"686.98 Earth days",
	"11.862 Earth years",
	"29.456 Earth years",
	"84.07 Earth years",
	"164.81 Earth years",
	"247.7 years",
];

const App = () => (
	<Shell>
		<GlobalStyle />
		<TopBar>
			<Sp $w={9} />
			<Logo />
			<Sp $w={8} />
			<MenuItem $mr={14}>File</MenuItem>
			<MenuItem $mr={15}>Edit</MenuItem>
			<MenuItem $mr={14}>Render</MenuItem>
			<MenuItem $mr={15}>Window</MenuItem>
			<MenuItem>Help</MenuItem>
			<Sp $w={25} />
			<Tab $w={50} $on>Layout</Tab>
			<Tab $w={63}>Modeling</Tab>
			<Tab $w={64}>Sculpting</Tab>
			<Tab $w={70}>UV Editing</Tab>
			<Tab $w={82}>Texture Paint</Tab>
			<Tab $w={58}>Shading</Tab>
			<Tab $w={68}>Animation</Tab>
			<Tab $w={67}>Rendering</Tab>
			<Tab $w={78}>Compositing</Tab>
			<Tab $w={64}>Scripting</Tab>
			<Tab $w={17}>+</Tab>
			<Fill />
			<BtnGroup>
				<Btn $w={31} $gap={1}><SceneIcon s={14} /><Chevron /></Btn>
				<FieldDark $w={117}>Scene</FieldDark>
				<Btn $w={20} $bg="#555" $r="0"><CopyIcon /></Btn>
				<Btn $w={20} $bg="#3a3a3a" $r="0" $c="#777"><CrossIcon /></Btn>
			</BtnGroup>
			<Sp $w={6} />
			<BtnGroup>
				<Btn $w={31} $gap={1}><PictureIcon s={14} /><Chevron /></Btn>
				<FieldDark $w={118}>View Layer</FieldDark>
				<Btn $w={20} $bg="#555" $r="0"><CopyIcon /></Btn>
				<Btn $w={20} $bg="#3a3a3a" $r="0" $c="#777"><CrossIcon /></Btn>
			</BtnGroup>
			<Sp $w={8} />
		</TopBar>

		<Workspace>
			<LeftCol>
				<UpperRow>
					<Area $w={585}>
						<Header>
							<Sp $w={7} />
							<Btn $w={32} $gap={2}>
								<Ico s={16} w={1.2}><path d="M1 11C5 11 5 5 8 5H15M1 5H6C9 5 9 11 12 11H15" /></Ico>
								<Chevron />
							</Btn>
							<Word $w={26} $ml={10}>View</Word>
							<Word $w={32} $ml={15}>Select</Word>
							<Word $w={36} $ml={14}>Marker</Word>
							<Word $w={42} $ml={14}>Channel</Word>
							<Word $w={20} $ml={13}>Key</Word>
							<BtnGroup $ml={14}>
								<Btn $w={88} $h={19} $bg="#555" $r="0" $j="flex-start" $pad={3} $gap={8}>
									<Ico s={14} w={1}><path d="M2 4V1.5H4.5M14 4V1.5H11.5M2 12V14.5H4.5M14 12V14.5H11.5M4 5 8 11 11 5" /></Ico>
									Normalize
								</Btn>
								<Btn $w={19} $bg="#3f5a80" $r="0">
									<Ico s={14} w={1.1}><path d="M2 7A6 6 0 0 1 13 5M14 9A6 6 0 0 1 3 11M13 1.5V5H9.5M3 14.5V11H6.5" /></Ico>
								</Btn>
							</BtnGroup>
							<BtnGroup $ml={18}>
								<Btn $w={18} $on $r="0"><Arrow s={13} /></Btn>
								<Btn $w={20} $bg="#555" $r="0"><DashBox s={13} /></Btn>
								<Btn $w={19} $bg="#555" $r="0">
									<SvgBox $s={13} viewBox="0 0 16 16"><path d="M8 1 15 15H1Z" fill="#eee" /><path d="M7.3 5H8.7V10.5H7.3ZM7.3 11.5H8.7V13H7.3Z" fill="#333" /></SvgBox>
								</Btn>
							</BtnGroup>
							<Btn $w={19} $ml={6} $bg="#555">
								<Ico s={13} w={1}><rect x="2" y="2" width="12" height="11" /><path d="M5 10 13 3M8 13V15" /></Ico>
							</Btn>
							<Btn $w={32} $ml={6} $gap={1}>
								<Ico s={15} w={1}><path d="M1 2H15L9.5 8V14.5L6.5 13V8Z" /></Ico>
								<Chevron />
							</Btn>
							<Btn $w={32} $ml={5} $gap={1}>
								<Ico s={14} w={1.1}><path d="M2 5V2H5M11 2H14V5M14 11V14H11M5 14H2V11" /><circle cx="8" cy="8" r="1.4" fill="currentColor" stroke="none" /></Ico>
								<Chevron />
							</Btn>
							<Btn $w={21} $ml={5} $j="flex-start" $pad={6} $r="4px 0 0 4px">Ne</Btn>
						</Header>
						<GraphBody>
							<ChannelList>
								<Search $w={204}><Lens /></Search>
								<Channels>
									{Object.keys(planetColors).map((n) => (
										<ChannelGroup key={n} name={n} />
									))}
								</Channels>
							</ChannelList>
							<Plot>
								<GraphPlot />
								<Badge $x={69} $y={1} $w={26}>1</Badge>
								<Thumb $x={370} $y={109} $w={6} $h={622} />
								<Thumb $x={81} $y={802} $w={28} $h={9} />
								<SideArrow $x={371} $y={12}>
									<SvgBox $s={7} viewBox="0 0 8 8" fill="none" stroke="#aaa"><path d="M6 1 2 4 6 7" /></SvgBox>
								</SideArrow>
							</Plot>
						</GraphBody>
					</Area>

					<Area $w={766} $ml={4} $bg="#393939">
						<Header $bg="#3b3b3b">
							<Sp $w={8} />
							<Btn $w={31} $gap={1}>
								<Ico s={15} w={1}><path d="M1 10H15M1 14H15M4 6V16M11 6V16" /><circle cx="8" cy="4" r="3.2" fill="currentColor" stroke="none" /></Ico>
								<Chevron />
							</Btn>
							<DashedBtn $w={23} $h={22} $ml={12} $bg="transparent" $r="1px">
								<SvgBox $s={12} viewBox="0 0 16 16"><path d="M4 2V14L13 8Z" fill="#eee" /></SvgBox>
							</DashedBtn>
							<BtnGroup $ml={14}>
								<Btn $w={18} $on $r="0"><DashBox s={14} /></Btn>
								<Btn $w={19} $bg="#555" $r="0">
									<SvgBox $s={14} viewBox="0 0 16 16"><path d="M6 1H14V15H2V6H6Z" fill="#ddd" /></SvgBox>
								</Btn>
								<Btn $w={19} $bg="#555" $r="0">
									<SvgBox $s={14} viewBox="0 0 16 16"><path d="M6 1H14V10H6Z" fill="#ddd" /><rect x="2" y="6" width="9" height="9" fill="none" stroke="#ccc" strokeDasharray="2 1" /></SvgBox>
								</Btn>
								<Btn $w={19} $bg="#555" $r="0">
									<SvgBox $s={14} viewBox="0 0 16 16"><path fillRule="evenodd" d="M1 1H15V15H1ZM5 5V11H11V5Z" fill="#ddd" /></SvgBox>
								</Btn>
								<Btn $w={19} $bg="#555" $r="0">
									<SvgBox $s={14} viewBox="0 0 16 16"><rect x="1.5" y="1.5" width="13" height="13" fill="none" stroke="#ccc" strokeDasharray="2 1" /><rect x="5" y="5" width="6" height="6" fill="#ddd" /></SvgBox>
								</Btn>
							</BtnGroup>
							<Btn $w={78} $ml={75} $j="flex-start" $pad={5} $gap={8}>
								<Ico s={15} w={1}><path d="M2 14 6 2M2 14H14M2 14 10 8" /></Ico>
								Global
								<Fill />
								<Chevron />
							</Btn>
							<Btn $w={31} $ml={7} $gap={1}>
								<Ico s={14} w={1}><path d="M2 2 14 14M14 2 2 14" /><circle cx="8" cy="8" r="3" fill="currentColor" stroke="none" /></Ico>
								<Chevron />
							</Btn>
							<BtnGroup $ml={6}>
								<Btn $w={18} $bg="#555" $r="0" $c="#aaa">
									<Ico s={14} w={1.4}><path d="M11 3A5 5 0 0 0 3 7C3 10 7 10 6 14M13 5C13 9 9 10 9 14" /></Ico>
								</Btn>
								<Btn $w={32} $r="0" $gap={1}>
									<Ico s={14} w={1}><path d="M1 12H15M3 10V14M8 10V14M13 10V14" /><rect x="8" y="2" width="4" height="4" fill="currentColor" stroke="none" /></Ico>
									<Chevron />
								</Btn>
							</BtnGroup>
							<BtnGroup $ml={6}>
								<Btn $w={18} $bg="#555" $r="0" $c="#999">
									<Ico s={14} w={1}><circle cx="8" cy="8" r="6" /><circle cx="8" cy="8" r="1.5" fill="currentColor" stroke="none" /></Ico>
								</Btn>
								<Btn $w={32} $r="0" $gap={1} $bg="#333" $c="#999">
									<Ico s={14} w={1}><path d="M1 14C5 14 5 2 8 2S11 14 15 14" /></Ico>
									<Chevron />
								</Btn>
							</BtnGroup>
							<Fill />
							<Btn $w={62} $j="space-between" $pad={7}>Options<Chevron /></Btn>
							<Sp $w={9} />
						</Header>
						<Canvas>
							<Scene3D />
							<CanvasLayer>
								<OverlayRow>
									<Sp $w={8} />
									<Btn $w={109} $j="flex-start" $pad={4} $gap={6}>
										<Ico s={15} w={1}><path d="M2 4V1.5H5M11 1.5H14V4M14 12V14.5H11M5 14.5H2V12" /><rect x="5" y="4" width="6" height="8" fill="currentColor" stroke="none" /></Ico>
										<span>Object Mode</span>
										<Fill />
										<Chevron />
									</Btn>
									<Btn $w={38} $ml={7} $bg="#333">View</Btn>
									<Btn $w={43} $ml={2} $bg="#333">Select</Btn>
									<Btn $w={32} $ml={3} $bg="#333">Add</Btn>
									<Btn $w={46} $ml={2} $bg="#333">Object</Btn>
									<Sp $w={219} />
									<Btn $w={31} $gap={1}><Ico s={15} w={1}><circle cx="9" cy="5" r="3.5" /><circle cx="9" cy="5" r="1.5" fill="currentColor" stroke="none" /><path d="M2 7V15L8 11Z" fill="currentColor" /></Ico><Chevron /></Btn>
									<BtnGroup $ml={7}>
										<Btn $w={19} $on $r="0"><Ico s={14} w={1}><path d="M2 14C3 8 7 3 14 2M11 1V5H15" /><circle cx="3" cy="13" r="1.5" /></Ico></Btn>
										<Btn $w={19} $r="0"><Chevron /></Btn>
									</BtnGroup>
									<BtnGroup $ml={6}>
										<Btn $w={19} $on $r="0"><Ico s={14} w={1}><circle cx="8" cy="8" r="6" fill="#ddd" /><circle cx="9" cy="7" r="2.5" fill="#5680c2" /></Ico></Btn>
										<Btn $w={19} $r="0"><Chevron /></Btn>
									</BtnGroup>
									<Btn $w={18} $ml={8} $bg="#505050"><Ico s={14} w={1}><rect x="5" y="1.5" width="9" height="10" /><path d="M5 4H2V14.5H11V11.5" /></Ico></Btn>
									<BtnGroup $ml={7}>
										<Btn $w={19} $bg="#555" $r="0"><Ico s={14} w={.9}><circle cx="8" cy="8" r="6.5" /><path d="M1.5 8H14.5M8 1.5C5 5 5 11 8 14.5C11 11 11 5 8 1.5" /></Ico></Btn>
										<Btn $w={19} $on $r="0"><SvgBox $s={14} viewBox="0 0 16 16"><circle cx="8" cy="8" r="7" fill="#f4f4f4" /></SvgBox></Btn>
										<Btn $w={19} $bg="#555" $r="0"><SvgBox $s={14} viewBox="0 0 16 16"><circle cx="8" cy="8" r="7" fill="#777" stroke="#ddd" /><path d="M8 1A7 7 0 0 1 8 15Z" fill="#ddd" /></SvgBox></Btn>
										<Btn $w={19} $bg="#555" $r="0"><SvgBox $s={14} viewBox="0 0 16 16"><circle cx="8" cy="8" r="7" fill="#666" stroke="#ddd" /><circle cx="10" cy="6" r="3" fill="#aaa" /></SvgBox></Btn>
										<Btn $w={19} $r="0"><Chevron /></Btn>
									</BtnGroup>
								</OverlayRow>
								<ToolRow>
									<Tools>
										<ToolGroup>
											<Tool $on><SelectTool /></Tool>
											<Tool><CursorIcon /></Tool>
										</ToolGroup>
										<ToolGroup>
											<Tool $h={33.5}><MoveIcon /></Tool>
											<Tool $h={33.5}><RotateIcon /></Tool>
											<Tool $h={33.5}><ScaleIcon /></Tool>
											<Tool $h={33.5}><TransformIcon /></Tool>
										</ToolGroup>
										<ToolGroup>
											<Tool><AnnotateIcon /></Tool>
											<Tool><MeasureIcon /></Tool>
										</ToolGroup>
									</Tools>
									<InfoBlock>
										<Info>Top Orthographic</Info>
										<Info $c="#d8d800">(1) earth | mercury</Info>
										<Info>Meters</Info>
									</InfoBlock>
								</ToolRow>
							</CanvasLayer>
							<AxisGizmo />
							<SideArrow $x={756} $y={38}>
								<SvgBox $s={7} viewBox="0 0 8 8" fill="none" stroke="#aaa"><path d="M6 1 2 4 6 7" /></SvgBox>
							</SideArrow>
							<NavBtn $x={728} $y={115}><ZoomLens /></NavBtn>
							<NavBtn $x={728} $y={146}><Hand /></NavBtn>
							<NavBtn $x={728} $y={176}>
								<Ico s={18} w={1}>
									<circle cx="6" cy="4" r="2.5" fill="currentColor" stroke="none" />
									<circle cx="11" cy="4" r="2" fill="currentColor" stroke="none" />
									<rect x="4" y="7" width="8" height="6" fill="currentColor" stroke="none" />
									<path d="M12 10 15 8V13Z" fill="currentColor" stroke="none" />
								</Ico>
							</NavBtn>
							<NavBtn $x={728} $y={207}>
								<Ico s={17} w={1}>
									<rect x="1.5" y="1.5" width="13" height="13" />
									<path d="M1.5 6H14.5M1.5 10.5H14.5M6 1.5V14.5M10.5 1.5V14.5" />
								</Ico>
							</NavBtn>
						</Canvas>
					</Area>

					<Area $w={228} $ml={2} $bg="#282828">
						<Header>
							<Sp $w={8} />
							<Btn $w={31} $gap={1}>
								<Ico s={15} w={1.2}>
									<rect x="1" y="1" width="5" height="3" fill="currentColor" stroke="none" />
									<path d="M3 4V13H7M3 8H7" />
									<rect x="8" y="6.5" width="7" height="3" fill="currentColor" stroke="none" />
									<rect x="8" y="11.5" width="7" height="3" fill="currentColor" stroke="none" />
								</Ico>
								<Chevron />
							</Btn>
							<Btn $w={31} $ml={6} $gap={1}><PictureIcon s={14} /><Chevron /></Btn>
							<Search $w={110} $m="0 0 0 17px"><Lens /></Search>
							<Btn $w={9} $ml={18} $r="4px 0 0 4px" />
						</Header>
						<OutRows>
							<OutRow $odd $pl={22}>
								<OutIcon $c="#dcdcdc"><Collection /></OutIcon>
								<span>Scene Collection</span>
							</OutRow>
							{buildRows()}
						</OutRows>
					</Area>
				</UpperRow>

				<Area $w={1585} $h={125} $bg="#303030">
					<Header $bg="#3a3a3a" $h={27}>
						<Sp $w={8} />
						<Btn $w={30} $gap={1}>
							<SvgBox $s={14} viewBox="0 0 16 16"><circle cx="8" cy="8" r="7" fill="#e4e4e4" /><path d="M10 1.5A7 7 0 0 1 10 14.5C13 10 12 6 10 1.5Z" fill="#2d2d2d" /></SvgBox>
							<Chevron />
						</Btn>
						<BtnGroup $ml={7}>
							<Btn $w={68} $r="0" $j="space-between" $pad={6}>Playback<Chevron /></Btn>
							<Btn $w={59} $r="0" $j="space-between" $pad={6}>Keying<Chevron /></Btn>
						</BtnGroup>
						<Word $w={26} $ml={8}>View</Word>
						<Word $w={36} $ml={13}>Marker</Word>
						<Sp $w={455} />
						<Btn $w={18} $bg="#555"><SvgBox $s={9} viewBox="0 0 10 10"><circle cx="5" cy="5" r="4.5" fill="#e8e8e8" /></SvgBox></Btn>
						<BtnGroup $ml={7}>
							{transport.map((d) => (
								<Btn key={d} $w={19} $bg="#555" $r="0"><SvgBox $s={13} viewBox="0 0 16 16"><path d={d} fill="#eee" /></SvgBox></Btn>
							))}
						</BtnGroup>
						<Sp $w={442} />
						<Btn $w={73} $bg="#555">1</Btn>
						<Sp $w={7} />
						<BtnGroup>
							<Btn $w={18} $bg="#3a3a3a" $r="0">
								<Ico s={15} w={1}><circle cx="8" cy="9.5" r="5.5" /><path d="M6 1.5H10M8 9.5 10 5" /></Ico>
							</Btn>
							<Btn $w={88} $bg="#555" $r="0" $j="space-between" $pad={16}><span>Start</span><span>1</span></Btn>
							<Btn $w={83} $bg="#555" $r="0">E 216000</Btn>
						</BtnGroup>
					</Header>
					<TimeCanvas>
						<TimelineBody />
						<Badge $x={779} $y={-1} $w={26}>1</Badge>
						<Thumb $x={8} $y={87} $w={1371} $h={8} />
						<SideArrow $x={0} $y={14}>
							<SvgBox $s={7} viewBox="0 0 8 8" fill="none" stroke="#aaa"><path d="M2 1 6 4 2 7" /></SvgBox>
						</SideArrow>
						<SideArrow $x={1576} $y={14}>
							<SvgBox $s={7} viewBox="0 0 8 8" fill="none" stroke="#aaa"><path d="M6 1 2 4 6 7" /></SvgBox>
						</SideArrow>
					</TimeCanvas>
				</Area>
			</LeftCol>

			<RightCol>
				<Area $w={332} $h={453}>
					<Header>
						<Sp $w={8} />
						<Btn $w={31} $gap={1}>
							<SvgBox $s={15} viewBox="0 0 16 16"><rect x="1" y="2" width="14" height="5" rx="2.5" fill="#e4e4e4" /><rect x="1" y="9" width="14" height="5" rx="2.5" fill="#e4e4e4" /><circle cx="5" cy="4.5" r="1.7" fill="#2d2d2d" /><circle cx="11" cy="11.5" r="1.7" fill="#2d2d2d" /></SvgBox>
							<Chevron />
						</Btn>
						<Sp $w={14} />
						<SceneIcon s={15} c="#e0e0e0" />
						<Sp $w={8} />
						<Word $w={32}>Scene</Word>
						<Fill />
						<Pin />
						<Sp $w={10} />
					</Header>
					<PropsBody>
						<TabCol>
							<TabGroup><PropTab><ToolsTab /></PropTab></TabGroup>
							<TabGroup>
								<PropTab><RenderTab /></PropTab>
								<PropTab $on><OutputTab /></PropTab>
								<PropTab><PictureIcon s={15} c="#d8d8d8" /></PropTab>
								<PropTab><SceneIcon s={15} c="#d8d8d8" /></PropTab>
								<PropTab><WorldTab /></PropTab>
							</TabGroup>
							<TabGroup>
								<PropTab><ObjectTab /></PropTab>
								<PropTab><FaWrench size={14} color="#6ea0e0" style={{ transform: "scaleX(-1)" }} /></PropTab>
								<PropTab><ParticleTab /></PropTab>
								<PropTab><PhysicsTab /></PropTab>
								<PropTab><LinkData s={15} /></PropTab>
								<PropTab><MeshData s={15} /></PropTab>
								<PropTab><MaterialTab /></PropTab>
							</TabGroup>
							<TabGroup><PropTab><TextureTab /></PropTab></TabGroup>
						</TabCol>
						<Panel>
							<PanelHead>
								<Caret open c="#aaa" s={8} />
								<span>Dimensions</span>
								<Fill />
								<PresetList />
								<Sp $w={8} />
								<Grip />
							</PanelHead>
							<Fields $mt={8}>
								<PropRow><PropLabel>Resolution X</PropLabel><NumField $r="4px 4px 0 0">1920 px</NumField></PropRow>
								<PropRow><PropLabel>Y</PropLabel><NumField>1080 px</NumField></PropRow>
								<PropRow><PropLabel>%</PropLabel><NumField $on $r="0 0 4px 4px">100%</NumField></PropRow>
							</Fields>
							<Fields $mt={5}>
								<PropRow><PropLabel>Aspect X</PropLabel><NumField $r="4px 4px 0 0">1.000</NumField></PropRow>
								<PropRow><PropLabel>Y</PropLabel><NumField $r="0 0 4px 4px">1.000</NumField></PropRow>
							</Fields>
							<CheckRow $mt={4}>Render Region<Tick $s={14} $bg="#666" /></CheckRow>
							<CheckRow $c="#868686">Crop to Render Region<Tick $s={14} $bg="#4c4c4c" /></CheckRow>
							<Fields $mt={8}>
								<PropRow><PropLabel>Frame Start</PropLabel><NumField $r="4px 4px 0 0">1</NumField></PropRow>
								<PropRow><PropLabel>End</PropLabel><NumField>216000</NumField></PropRow>
								<PropRow><PropLabel>Step</PropLabel><NumField $r="0 0 4px 4px">1</NumField></PropRow>
							</Fields>
							<Fields $mt={5}>
								<PropRow><PropLabel>Frame Rate</PropLabel><DropField>60 fps<Chevron /></DropField></PropRow>
							</Fields>
							<SubHead><Caret c="#aaa" s={8} />Time Remapping</SubHead>
							<PanelHead>
								<Caret c="#999" s={8} />
								<Tick $s={13} $bg="#666" />
								<span>Stereoscopy</span>
								<Fill />
								<Grip />
							</PanelHead>
							<PanelHead>
								<Caret open c="#aaa" s={8} />
								<span>Output</span>
								<Fill />
								<Grip />
							</PanelHead>
							<PathField>
								<PathText>/tmp\</PathText>
								<PathBtn>
									<SvgBox $s={14} viewBox="0 0 16 16"><path d="M1 2H7L8.5 4H15V14H1Z" fill="#e4e4e4" /><rect x="1" y="5" width="14" height="1" fill="#555" /></SvgBox>
								</PathBtn>
							</PathField>
							<TwoCols $mt={5}>
								<CheckRow $pr={0}>Overwrite<Tick $s={13} $bg={BLUE}><Check /></Tick></CheckRow>
								<CheckRow>Placeholders<Tick $s={14} $bg="#666" /></CheckRow>
							</TwoCols>
							<TwoCols $mt={2}>
								<CheckRow $pr={0}>File Extensions<Tick $s={13} $bg={BLUE}><Check /></Tick></CheckRow>
								<CheckRow>Cache Result<Tick $s={14} $bg="#666" /></CheckRow>
							</TwoCols>
						</Panel>
					</PropsBody>
				</Area>

				<Area $w={332} $h={512}>
					<Header $h={25}>
						<Sp $w={7} />
						<Btn $w={30} $gap={1}>
							<Ico s={15} w={1}><rect x="1.5" y="1.5" width="13" height="13" /><path d="M4 3.5H12V7.5H9.5V12.5H6.5V7.5H4Z" fill="currentColor" /></Ico>
							<Chevron />
						</Btn>
						<Btn $w={65} $ml={7} $j="space-between" $pad={4}>
							<PictureIcon s={14} />
							<span>View</span>
							<Chevron />
						</Btn>
						<Word $w={26} $ml={12}>View</Word>
						<Word $w={32} $ml={14}>Image</Word>
						<BtnGroup $ml={25}>
							<Btn $w={30} $gap={1}><PictureIcon s={14} /><Chevron /></Btn>
							<FieldDark $w={85}>solinfo.png</FieldDark>
						</BtnGroup>
					</Header>
					<ImageView>
						<Cell $pink />
						<Cell $pink>
							<TitleLine>Period of Revolution Around the Sun</TitleLine>
							<CellSub>(1 planetary year)</CellSub>
						</Cell>
						<Cell $pink $end $a="flex-end"><TitleLine>P</TitleLine></Cell>
						{rows.map((r, i) => (
							<React.Fragment key={r}>
								<Cell $a="flex-start" $j={i === 0 ? "flex-start" : "center"}>
									{i === 0 && <Stray $c="#2a62b8">s</Stray>}
								</Cell>
								<Cell>{r}</Cell>
								<Cell $end />
							</React.Fragment>
						))}
						<Cell $pink />
						<Cell $pink $j="flex-start"><TitleLine $mt={15}>Period of Revolution Around the Sun</TitleLine></Cell>
						<Cell $pink $end />
						<Pill $x={0} $r="0 3px 3px 0" />
						<Pill $x={325} $r="3px 0 0 3px" />
						<NavBtn $x={293} $y={8} $bg="rgba(90,80,90,0.72)"><ZoomLens /></NavBtn>
						<NavBtn $x={293} $y={38} $bg="rgba(90,90,90,0.72)"><Hand /></NavBtn>
					</ImageView>
				</Area>
			</RightCol>
		</Workspace>

		<StatusBar>
			<Sp $w={9} />
			<Mouse fill="l" />
			<Sp $w={9} />
			<Hint $w={212}>Change Frame</Hint>
			<Mouse fill="m" />
			<Sp $w={9} />
			<Hint $w={212}>Pan View</Hint>
			<Mouse fill="r" />
			<Sp $w={9} />
			<span>Sample Color</span>
			<Fill />
			<span>earth | mercury | Verts:890 | Faces:72 | Tris:144 | Objects:8/25 | Mem: 38.7 MiB | v2.82.7</span>
			<Sp $w={18} />
		</StatusBar>
	</Shell>
);

export default App;
